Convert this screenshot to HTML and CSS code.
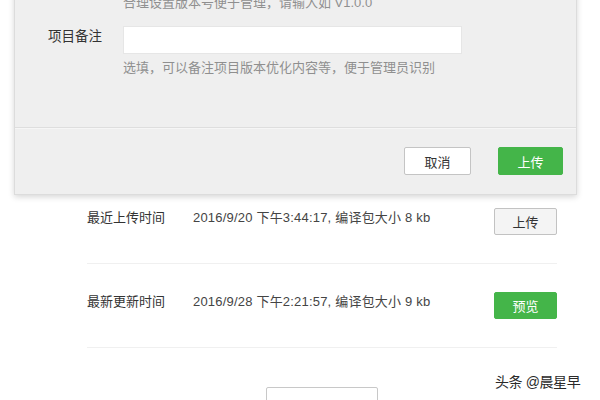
FILE: index.html
```html
<!DOCTYPE html>
<html lang="zh-CN">
<head>
<meta charset="utf-8">
<title>版本管理</title>
<link rel="stylesheet" href="styles.css">
</head>
<body>
<div class="page">
  <div class="dialog">
    <div class="dialog-body">
      <div class="form-row">
        <span class="form-label"></span>
        <div class="form-field">
          <p class="tip">合理设置版本号便于管理，请输入如 V1.0.0</p>
        </div>
      </div>
      <div class="form-row form-row-note">
        <label class="form-label">项目备注</label>
        <div class="form-field">
          <input class="text-input" type="text">
          <p class="tip tip-below">选填，可以备注项目版本优化内容等，便于管理员识别</p>
        </div>
      </div>
    </div>
    <div class="dialog-foot">
      <button class="btn btn-default">取消</button>
      <button class="btn btn-primary">上传</button>
    </div>
  </div>

  <div class="version-list">
    <div class="version-row">
      <span class="v-label">最近上传时间</span>
      <span class="v-value">2016/9/20 下午3:44:17, 编译包大小 8 kb</span>
      <button class="btn btn-gray">上传</button>
    </div>
    <div class="version-row">
      <span class="v-label">最新更新时间</span>
      <span class="v-value">2016/9/28 下午2:21:57, 编译包大小 9 kb</span>
      <button class="btn btn-primary">预览</button>
    </div>
  </div>

  <div class="more">
    <button class="btn btn-more">提交审核</button>
  </div>

  <div class="watermark">头条 @晨星早</div>
</div>
</body>
</html>
```
FILE: styles.css
```css
html, body {
  margin: 0;
  padding: 0;
  background: #ffffff;
  overflow: hidden;
}
body {
  font-family: "Liberation Sans", "Noto Sans CJK SC", sans-serif;
  color: #333;
}
.page {
  position: relative;
  width: 600px;
  height: 400px;
  overflow: hidden;
}

/* dialog */
.dialog {
  position: relative;
  z-index: 2;
  margin: -27px 0 0 14px;
  width: 561px;
  background: #efefef;
  border: 1px solid #dcdcdc;
  box-shadow: 0 2px 6px rgba(0, 0, 0, 0.16);
}
.dialog-body {
  padding: 20px 0 50px 33px;
}
.form-row {
  display: flex;
  align-items: flex-start;
}
.form-row-note {
  margin-top: 14px;
}
.form-label {
  width: 75px;
  flex: none;
  font-size: 13.5px;
  line-height: 20px;
  margin-top: 1px;
  color: #333;
}
.form-field {
  display: flex;
  flex-direction: column;
}
.tip {
  margin: 0;
  font-size: 13px;
  line-height: 18px;
  color: #8f8f8f;
}
.tip-below {
  margin-top: 5px;
}
.text-input {
  box-sizing: border-box;
  width: 339px;
  height: 28px;
  margin: 0;
  border: 1px solid #e6e6e6;
  background: #fff;
  outline: none;
}
.dialog-foot {
  display: flex;
  justify-content: flex-end;
  gap: 27px;
  padding: 19px 13px 19px 0;
  border-top: 1px solid #dedede;
  box-shadow: inset 0 1px 0 #f6f6f6;
}

/* buttons */
.btn {
  box-sizing: border-box;
  height: 28px;
  padding: 0;
  border-radius: 2px;
  font-family: inherit;
  font-size: 13px;
  cursor: pointer;
}
.btn-default {
  width: 67px;
  background: #fff;
  border: 1px solid #c4c4c4;
  color: #333;
}
.btn-primary {
  width: 65px;
  background: #44b549;
  border: 1px solid #44b549;
  color: #fff;
}
.btn-gray {
  width: 63px;
  height: 27px;
  background: #f4f4f4;
  border: 1px solid #c2c2c2;
  color: #333;
}
.version-row .btn-primary {
  width: 63px;
  height: 27px;
}

/* list */
.version-list {
  position: relative;
  z-index: 1;
  margin: -15px 0 0 87px;
  width: 470px;
}
.version-row {
  display: flex;
  align-items: flex-start;
  padding: 28px 0;
  border-bottom: 1px solid #f0f0f0;
}
.v-label {
  width: 106px;
  flex: none;
  font-size: 13px;
  line-height: 20px;
  color: #333;
}
.v-value {
  flex: 1;
  font-size: 13px;
  line-height: 20px;
  letter-spacing: 0.2px;
  color: #444;
}

.more {
  margin: 39px 0 0 266px;
}
.btn-more {
  width: 112px;
  height: 34px;
  background: #fff;
  border: 1px solid #c8c8c8;
  color: #555;
  padding-top: 4px;
  vertical-align: top;
}

.watermark {
  position: absolute;
  left: 495px;
  top: 372px;
  font-size: 14px;
  line-height: 20px;
  letter-spacing: -0.4px;
  color: #2a2a2a;
  text-shadow: 0 0 2px #fff;
}
```
